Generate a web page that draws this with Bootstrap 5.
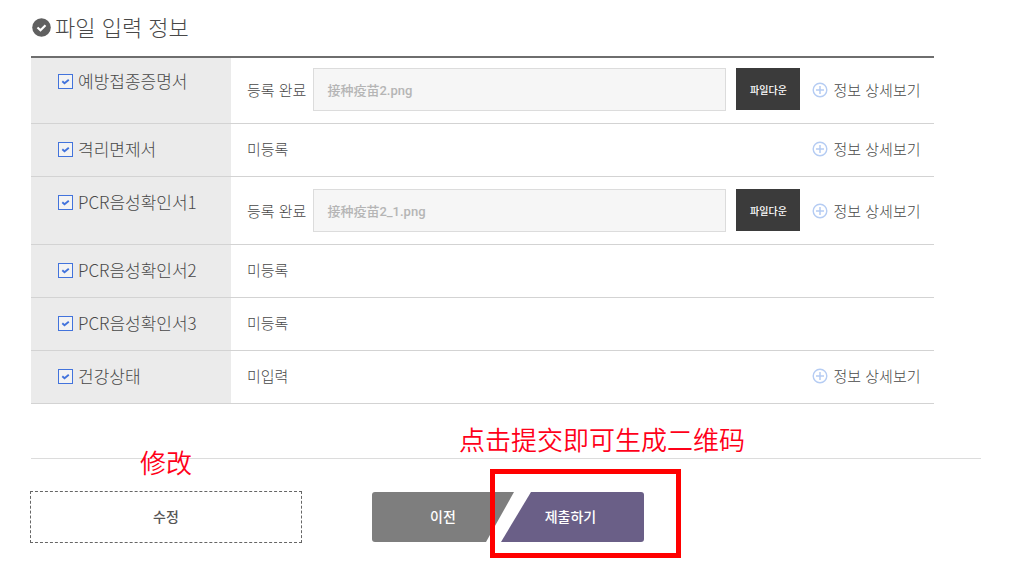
<!DOCTYPE html>
<html lang="ko">
<head>
<meta charset="utf-8">
<meta name="viewport" content="width=device-width, initial-scale=1">
<title>파일 입력 정보</title>
<link href="https://cdn.jsdelivr.net/npm/bootstrap@5.3.0/dist/css/bootstrap.min.css" rel="stylesheet">
<style>
body { font-family: "Noto Sans CJK KR", sans-serif; font-weight: 300; color: #484848; background: #fff; }
.page { padding: 8px 32px 16px 31px; }
.page-title { font-size: 22px; line-height: 36px; font-weight: 300; gap: 3px; margin-bottom: 12px; color: #484848; }
.file-table { width: 95%; border-collapse: separate; border-spacing: 0; font-size: 15px; line-height: 26px; }
.file-table th, .file-table td { padding: 12px 13px 12px 16px; vertical-align: top; border-bottom: 1px solid #d3d3d3; }
.file-table tr:first-child > * { border-top: 2px solid #6e6e6e; padding-top: 10px; }
.file-table th { width: 200px; padding-left: 27px; background: #ebebeb; font-size: 17px; font-weight: 300; }
.cell-line { min-height: 28px; }
.check-line { gap: 5px; }
.check-box { appearance: none; flex: none; width: 15px; height: 15px; margin: 0; border: 1px solid #4273dc; background: #f3f3f3 url("data:image/svg+xml,%3Csvg xmlns='http://www.w3.org/2000/svg' viewBox='0 0 13 13'%3E%3Cpath d='M3.300 6.300l2.200 1.900 4.300-3.400' fill='none' stroke='%234273dc' stroke-width='1.900'/%3E%3C/svg%3E"); }
.file-name { min-width: 0; height: 43px; margin: 0 10px 0 7px; padding: 0 13px; border: 1px solid #dcdcdc; background: #f6f6f6; color: #b5b5b5; font: 500 13px "Roboto", "Noto Sans CJK SC", sans-serif; }
.btn-down { width: 64px; height: 42px; margin-right: 12px; padding: 0; border: 0; border-radius: 0; background: #3b3b3b; color: #fff; font-size: 10px; font-weight: 500; }
.detail-link { gap: 5px; height: 26px; color: #484848; white-space: nowrap; }
.divider { margin: 54px 0 32px; border-top: 1px solid #dcdcdc; }
.actions { gap: 70px; margin-left: -1px; }
.action-col { width: 272px; }
.action { height: 50px; padding: 0 0 2px; border: 0; color: #fff; font-size: 14px; font-weight: 500; width: 100%; }
.btn-edit { height: 52px; border: 1px dashed #666; color: #555; border-radius: 0; }
.btn-prev { width: 142px; background: #7e7e7e; clip-path: polygon(0 0, 100% 0, 114px 100%, 0 100%); border-radius: 3px 0 0 3px; }
.btn-submit { background: #6a5f87; clip-path: polygon(30px 0, 100% 0, 100% 100%, 0 100%); border-radius: 0 3px 3px 0; padding-right: 4px; }
.submit-wrap { margin-left: -13px; }
.note { position: absolute; font: 350 26px/34px "Noto Sans CJK SC", sans-serif; color: #ff0019; white-space: nowrap; }
.note-edit { left: 0; right: 0; top: -46px; text-align: center; }
.note-submit { left: -42px; top: -70px; }
.note-frame { position: absolute; inset: -23px -37px -16px -11px; border: 5px solid red; pointer-events: none; }
</style>
</head>
<body>
<main class="page">
  <h1 class="page-title d-flex align-items-center">
    <svg width="21" height="21" viewBox="0 0 21 21" aria-hidden="true"><circle cx="10.500" cy="11.500" r="9.300" fill="#606060"/><path d="M6.500 11.500l3 2.800 5-5" fill="none" stroke="#fff" stroke-width="2.200"/></svg>
    파일 입력 정보
  </h1>

  <svg class="d-none"><symbol id="plus" viewBox="0 0 16 16"><circle cx="8" cy="8" r="6.800" fill="none" stroke="#b5ccf3" stroke-width="1.400"/><path d="M8 4v8M4 8h8" stroke="#b5ccf3" stroke-width="1.500"/></symbol></svg>

  <table class="file-table">
    <tbody>
      <tr>
        <th scope="row"><label class="check-line d-flex align-items-center"><input class="check-box" type="checkbox" checked>예방접종증명서</label></th>
        <td><div class="cell-line d-flex align-items-start">
          <label class="text-nowrap align-self-center" for="file1">등록 완료</label>
          <input class="file-name flex-fill" id="file1" type="text" value="接种疫苗2.png" readonly>
          <button class="btn btn-down" type="button">파일다운</button>
          <a class="detail-link d-flex align-items-center align-self-center text-decoration-none" href="#"><svg width="16" height="16" aria-hidden="true"><use href="#plus"/></svg>정보 상세보기</a>
        </div></td>
      </tr>
      <tr>
        <th scope="row"><label class="check-line d-flex align-items-center"><input class="check-box" type="checkbox" checked>격리면제서</label></th>
        <td><div class="cell-line d-flex justify-content-between">
          <span>미등록</span>
          <a class="detail-link d-flex align-items-center text-decoration-none" href="#"><svg width="16" height="16" aria-hidden="true"><use href="#plus"/></svg>정보 상세보기</a>
        </div></td>
      </tr>
      <tr>
        <th scope="row"><label class="check-line d-flex align-items-center"><input class="check-box" type="checkbox" checked>PCR음성확인서1</label></th>
        <td><div class="cell-line d-flex align-items-start">
          <label class="text-nowrap align-self-center" for="file2">등록 완료</label>
          <input class="file-name flex-fill" id="file2" type="text" value="接种疫苗2_1.png" readonly>
          <button class="btn btn-down" type="button">파일다운</button>
          <a class="detail-link d-flex align-items-center align-self-center text-decoration-none" href="#"><svg width="16" height="16" aria-hidden="true"><use href="#plus"/></svg>정보 상세보기</a>
        </div></td>
      </tr>
      <tr>
        <th scope="row"><label class="check-line d-flex align-items-center"><input class="check-box" type="checkbox" checked>PCR음성확인서2</label></th>
        <td><div class="cell-line d-flex"><span>미등록</span></div></td>
      </tr>
      <tr>
        <th scope="row"><label class="check-line d-flex align-items-center"><input class="check-box" type="checkbox" checked>PCR음성확인서3</label></th>
        <td><div class="cell-line d-flex"><span>미등록</span></div></td>
      </tr>
      <tr>
        <th scope="row"><label class="check-line d-flex align-items-center"><input class="check-box" type="checkbox" checked>건강상태</label></th>
        <td><div class="cell-line d-flex justify-content-between">
          <span>미입력</span>
          <a class="detail-link d-flex align-items-center text-decoration-none" href="#"><svg width="16" height="16" aria-hidden="true"><use href="#plus"/></svg>정보 상세보기</a>
        </div></td>
      </tr>
    </tbody>
  </table>

  <div class="divider"></div>

  <div class="actions d-flex align-items-center">
    <div class="action-col position-relative">
      <button class="btn action btn-edit" type="button">수정</button>
      <span class="note note-edit" lang="zh-CN">修改</span>
    </div>
    <div class="action-col d-flex">
      <button class="btn action btn-prev flex-shrink-0" type="button">이전</button>
      <div class="submit-wrap position-relative flex-fill">
        <button class="btn action btn-submit" type="submit">제출하기</button>
        <span class="note note-submit" lang="zh-CN">点击提交即可生成二维码</span>
        <span class="note-frame"></span>
      </div>
    </div>
  </div>
</main>
<script src="https://cdn.jsdelivr.net/npm/bootstrap@5.3.0/dist/js/bootstrap.bundle.min.js"></script>
</body>
</html>
